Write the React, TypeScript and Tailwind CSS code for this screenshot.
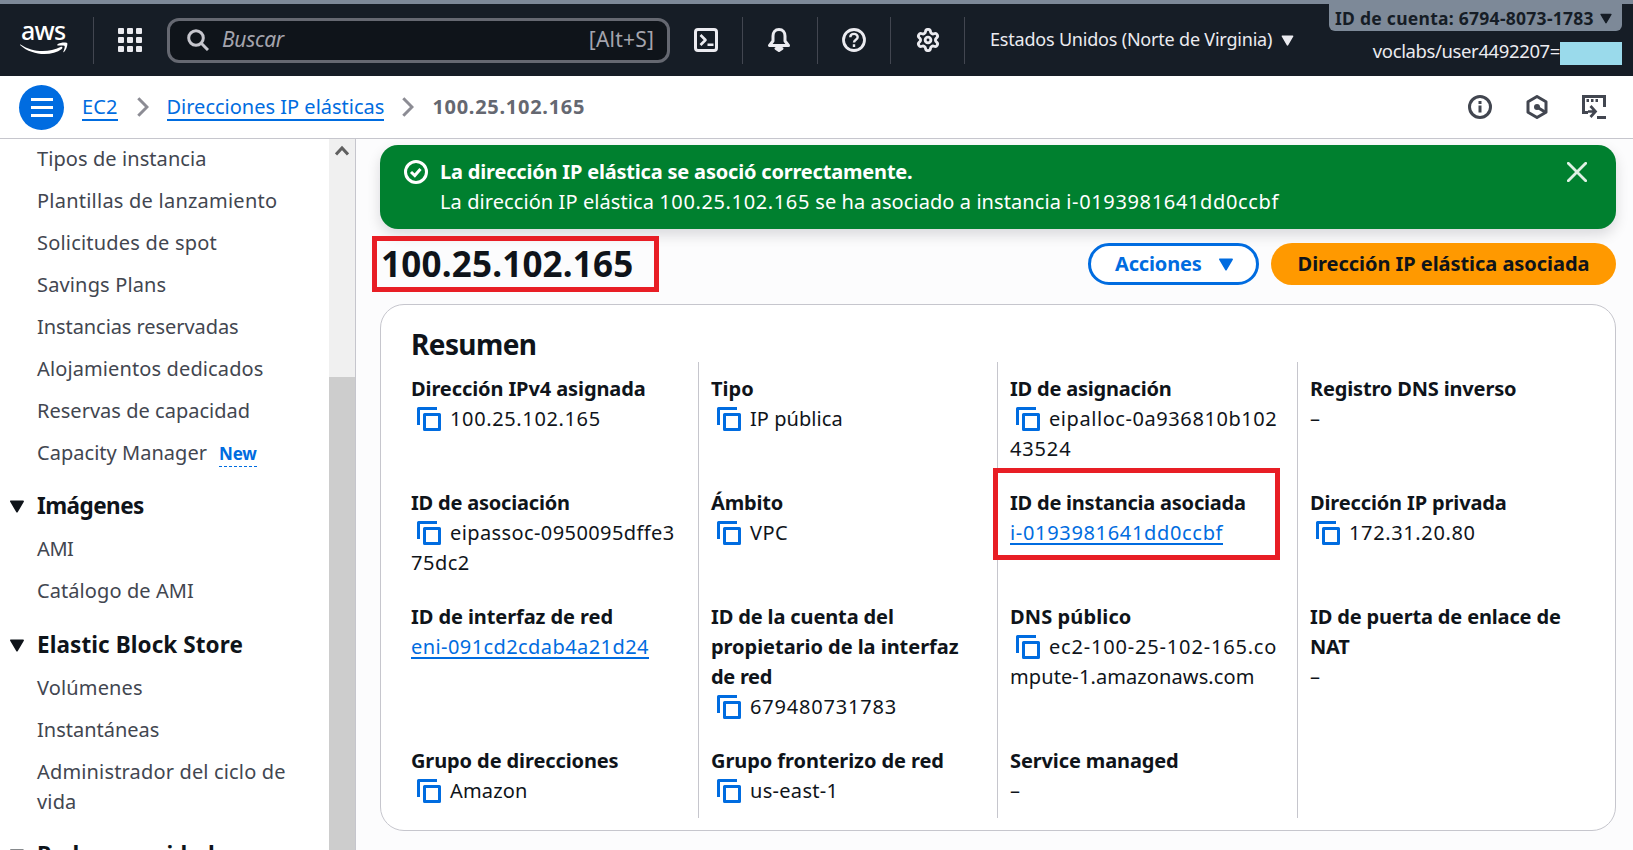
import type { ReactNode } from "react";

function Caret({ className }: { className: string }) {
  return (
    <svg viewBox="0 0 16 14" className={className} fill="currentColor" stroke="currentColor" strokeWidth="2" strokeLinejoin="round">
      <path d="M1.5 1.5h13L8 12.5z" />
    </svg>
  );
}

function CopyIcon() {
  return (
    <svg viewBox="0 0 24 24" className="mr-[9px] ml-[6px] inline-block size-[24px] align-[-5px]" fill="none" stroke="#006ce0" strokeWidth="3" strokeLinejoin="round">
      <path d="M1.5 18V1.5H20" />
      <path d="M7.5 7.5h15v15h-15z" />
    </svg>
  );
}

function Chevron() {
  return (
    <svg viewBox="0 0 12 20" className="h-[20px] w-[12px] shrink-0" fill="none" stroke="#8c8c94" strokeWidth="3">
      <path d="M1.3 1.2 10 10l-8.700 8.800" />
    </svg>
  );
}

function Divider() {
  return <div className="h-[47px] w-px shrink-0 bg-[#424650]" />;
}

function AwsLogo() {
  return (
    <div className="relative ml-[20px] h-[36px] w-[50px] shrink-0 text-white">
      <span className="absolute -top-[6px] left-[1px] text-[25px] leading-[28px] font-medium tracking-[-0.8px]">aws</span>
      <svg viewBox="0 0 50 36" className="absolute top-px left-0 h-[36px] w-[50px]" fill="white">
        <path d="M.5 21.500c12 8 28 8.500 40 2.500 1.600-.7 2.700.8 1.200 2C32 33.500 12 33 .3 22.300c-.6-.5-.2-1.100.2-.8z" />
        <path d="M37.500 21.200c2.500-2 9-2.200 9.700-1.200.7 1.200-.6 6.600-3.200 9-.5.400-.9.200-.7-.3.700-1.700 1.900-4.900 1.300-5.700-.7-.9-4.500-.6-6.500-.4-.8.100-1-.9-.6-1.400z" />
      </svg>
    </div>
  );
}

function GridIcon() {
  return (
    <div className="grid grid-cols-3 gap-[3px]">
      {Array.from({ length: 9 }, (_, i) => (
        <span key={i} className="size-[6px] rounded-[1px] bg-[#ebebf0]" />
      ))}
    </div>
  );
}

function TopBar() {
  return (
    <header className="h-[76px] shrink-0 border-t-4 border-[#7d8998] bg-[#161d26] text-[#ebebf0]">
      <div className="flex h-[72px] items-center">
        <AwsLogo />
        <div className="ml-[23px]"><Divider /></div>
        <div className="ml-[24px]"><GridIcon /></div>
        <div className="ml-[25px] flex h-[45px] w-[503px] shrink-0 items-center rounded-[12px] border-[3px] border-[#656871] bg-[#0f141a] pr-[13px] pl-[17px]">
          <svg viewBox="0 0 22 22" className="size-[22px]" fill="none" stroke="#c6c6cd" strokeWidth="3">
            <circle cx="9" cy="9" r="7.300" />
            <path d="m14 14 7 7" />
          </svg>
          <span className="ml-[13px] text-[21px] text-[#a4a4ad] italic tracking-[-0.3px]">Buscar</span>
          <span className="ml-auto text-[21px] text-[#a4a4ad] tracking-[0.2px]">[Alt+S]</span>
        </div>
        <svg viewBox="0 0 24 24" className="ml-[24px] size-[24px] shrink-0" fill="none" stroke="#ebebf0" strokeWidth="3" strokeLinejoin="round">
          <rect x="1.500" y="1.500" width="21" height="21" rx="2.500" />
          <path d="m6.500 7 5 5-5 5M13.500 16.800h6" strokeWidth="2.600" />
        </svg>
        <div className="ml-[24px]"><Divider /></div>
        <svg viewBox="0 0 24 24" className="ml-[24px] size-[24px] shrink-0" fill="none" stroke="#ebebf0" strokeWidth="3" strokeLinejoin="round">
          <path d="M12 1.500c-4 0-6 2.800-6 6.500v5L2.500 17.500h19L18 13V8c0-3.700-2-6.500-6-6.500z" />
          <path d="M9 20.500h6L12 22.500z" />
        </svg>
        <div className="ml-[26px]"><Divider /></div>
        <svg viewBox="0 0 24 24" className="ml-[24px] size-[24px] shrink-0" fill="none" stroke="#ebebf0" strokeWidth="2.800">
          <circle cx="12" cy="12" r="10.500" />
          <path d="M8.300 9.300c0-4.500 7.400-4.500 7.400-.2 0 2.800-3.700 2.500-3.700 5.400M12 16.300v2.600" strokeWidth="2.400" />
        </svg>
        <div className="ml-[24px]"><Divider /></div>
        <svg viewBox="0.700 0.700 22.600 22.600" className="ml-[25px] size-[24px] shrink-0" fill="none" stroke="#ebebf0" strokeWidth="2.700" strokeLinejoin="round">
          <path d="M9.671 4.136a2.340 2.340 0 0 1 4.659 0 2.340 2.340 0 0 0 3.319 1.915 2.340 2.340 0 0 1 2.330 4.033 2.340 2.340 0 0 0 0 3.831 2.340 2.340 0 0 1-2.330 4.033 2.340 2.340 0 0 0-3.319 1.915 2.340 2.340 0 0 1-4.659 0 2.340 2.340 0 0 0-3.320-1.915 2.340 2.340 0 0 1-2.330-4.033 2.340 2.340 0 0 0 0-3.831A2.340 2.340 0 0 1 6.350 6.051a2.340 2.340 0 0 0 3.319-1.915z" />
          <circle cx="12" cy="12" r="2.700" />
        </svg>
        <div className="ml-[24px]"><Divider /></div>
        <span className="ml-[25px] pb-px text-[18px] whitespace-nowrap tracking-[-0.200px]">Estados Unidos (Norte de Virginia)</span>
        <Caret className="ml-[9px] h-[11px] w-[13px] shrink-0" />
        <div className="mr-[11px] ml-auto flex h-[72px] flex-col items-end">
          <div className="-mt-px flex h-[28px] w-[293px] items-center justify-between rounded-b-[6px] bg-[#7d8998] pt-[2px] pr-[10px] pl-[6px] text-[#161d26]">
            <span className="text-[17.500px] font-bold whitespace-nowrap tracking-[0.270px]">ID de cuenta: 6794-8073-1783</span>
            <Caret className="h-[11px] w-[12px]" />
          </div>
          <div className="mt-[11px] flex h-[23px] items-center">
            <span className="pb-[5px] text-[18.500px] whitespace-nowrap tracking-[-0.380px]">voclabs/user4492207=</span>
            <span className="h-[23px] w-[62px] bg-[#9adaeb]" />
          </div>
        </div>
      </div>
    </header>
  );
}

function Breadcrumbs() {
  return (
    <nav className="flex h-[63px] shrink-0 items-center border-b border-[#c6c6cd] bg-white text-[20px]">
      <div className="ml-[19px] flex size-[45px] shrink-0 flex-col items-center justify-center gap-[5px] rounded-full bg-[#006ce0]">
        <span className="h-[3px] w-[22px] bg-white" />
        <span className="h-[3px] w-[22px] bg-white" />
        <span className="h-[3px] w-[22px] bg-white" />
      </div>
      <a className="ml-[18px] h-[28px] border-b-2 border-[#006ce0] leading-[28px] text-[#006ce0] tracking-[0.100px]">EC2</a>
      <div className="ml-[19px]"><Chevron /></div>
      <a className="ml-[18px] h-[28px] border-b-2 border-[#006ce0] leading-[28px] text-[#006ce0]">Direcciones IP elásticas</a>
      <div className="ml-[18px]"><Chevron /></div>
      <span className="ml-[18px] font-bold text-[#656871] tracking-[0.720px]">100.25.102.165</span>
      <div className="mr-[27px] ml-auto flex items-center gap-[33px] text-[#424650]">
        <svg viewBox="0 0 24 24" className="size-[24px]" fill="none" stroke="currentColor" strokeWidth="3">
          <circle cx="12" cy="12" r="10.500" />
          <path d="M12 10.500v7M12 6v3" />
        </svg>
        <svg viewBox="0 0 24 24" className="size-[24px]" fill="none" stroke="currentColor" strokeWidth="3" strokeLinejoin="round">
          <path d="m12 1.500 9 5.200v10.600l-9 5.200-9-5.200V6.700z" />
          <circle cx="12" cy="12" r="3" fill="currentColor" stroke="none" />
          <path d="m12 12 8 5" />
        </svg>
        <svg viewBox="0 0 24 24" className="size-[24px]" fill="none" stroke="currentColor" strokeWidth="3">
          <path d="M6 17.500H1.500v-16h21V12M15 22.500h9" />
          <path d="M4.500 5.500h2.500M9 5.500h2.500M13.500 5.500H16" />
          <path d="M6 16.500h7M8.500 11l5 5.500-5 5.500" strokeWidth="2.700" />
        </svg>
      </div>
    </nav>
  );
}

function NavItem({ children, tracking }: { children: ReactNode; tracking: string }) {
  return (
    <div className="mb-[12px] pr-[30px] pl-[37px] text-[20px] leading-[30px] text-[#424650]">
      <span className={tracking}>{children}</span>
    </div>
  );
}

function NavSection({ children, className }: { children: ReactNode; className: string }) {
  return (
    <div className={className}>
      <div className="mb-[13px] flex h-[30px] items-center pl-[9px] text-[22.500px] font-bold text-[#0f141a]">
        <Caret className="mr-[12px] h-[13px] w-[16px]" />
        {children}
      </div>
    </div>
  );
}

function Sidebar() {
  return (
    <aside className="flex w-[356px] shrink-0 border-r border-[#c6c6cd] bg-white">
      <div className="w-[329px] shrink-0 overflow-hidden pt-[5px] whitespace-nowrap">
        <NavItem tracking="tracking-[0.080px]">Tipos de instancia</NavItem>
        <NavItem tracking="tracking-[0.230px]">Plantillas de lanzamiento</NavItem>
        <NavItem tracking="tracking-[0.200px]">Solicitudes de spot</NavItem>
        <NavItem tracking="tracking-[0.150px]">Savings Plans</NavItem>
        <NavItem tracking="tracking-[-0.070px]">Instancias reservadas</NavItem>
        <NavItem tracking="tracking-[0.120px]">Alojamientos dedicados</NavItem>
        <NavItem tracking="tracking-[0.020px]">Reservas de capacidad</NavItem>
        <NavItem tracking="tracking-[0.030px]">
          Capacity Manager
          <span className="ml-[12px] inline-block border-b border-dashed border-[#006ce0] text-[17px] leading-[24px] font-bold text-[#006ce0] tracking-[-0.200px]">New</span>
        </NavItem>
        <NavSection className="pt-[11px] tracking-[-0.550px]">Imágenes</NavSection>
        <NavItem tracking="tracking-[-0.400px]">AMI</NavItem>
        <NavItem tracking="tracking-[0.080px]">Catálogo de AMI</NavItem>
        <NavSection className="pt-[12px] tracking-[0.080px]">Elastic Block Store</NavSection>
        <NavItem tracking="tracking-[0.150px]">Volúmenes</NavItem>
        <NavItem tracking="tracking-[0px]">Instantáneas</NavItem>
        <NavItem tracking="tracking-[0.160px]">Administrador del ciclo de<br />vida</NavItem>
        <NavSection className="pt-[11px] tracking-[-0.100px]">Red y seguridad</NavSection>
      </div>
      <div className="w-[26px] shrink-0 bg-[#f0f0f0]">
        <div className="flex h-[238px] justify-center pt-[6px]">
          <svg viewBox="0 0 14 12" className="h-[12px] w-[14px]" fill="none" stroke="#606060" strokeWidth="3">
            <path d="m1 9.500 6-6.500 6 6.500" />
          </svg>
        </div>
        <div className="h-full bg-[#cdcdcd]" />
      </div>
    </aside>
  );
}

/** A line of text with the letter spacing it is set in. */
type Line = [text: string, tracking: string];

function Field({ label, lines, copy, link }: { label: Line[]; lines: Line[]; copy?: boolean; link?: boolean }) {
  return (
    <div className="text-[20px] leading-[30px] whitespace-nowrap text-[#0f141a]">
      {label.map(([text, tracking]) => (
        <div key={text} className="font-bold"><span className={tracking}>{text}</span></div>
      ))}
      {lines.map(([text, tracking], i) => (
        <div key={text} className="h-[30px]">
          {copy && i === 0 && <CopyIcon />}
          <span className={tracking}>
            {link ? <a className="inline-block h-[27px] border-b-2 border-[#006ce0] text-[#006ce0]">{text}</a> : text}
          </span>
        </div>
      ))}
    </div>
  );
}

function Column({ children, first }: { children: ReactNode; first?: boolean }) {
  return (
    <div className={first ? "grid grid-rows-[114px_114px_144px_60px] py-[12px]" : "grid grid-rows-[114px_114px_144px_60px] border-l border-[#c6c6cd] py-[12px] pl-[12px]"}>
      {children}
    </div>
  );
}

function Summary() {
  return (
    <section className="h-[527px] w-[1236px] rounded-[24px] border border-[#c6c6cd] bg-white">
      <h2 className="pt-[21px] pl-[30px] text-[28px] leading-[36px] font-bold text-[#0f141a] tracking-[-0.600px]">Resumen</h2>
      <div className="relative grid grid-cols-[287px_299px_300px_300px] pl-[30px]">
        <Column first>
          <Field label={[["Dirección IPv4 asignada", "tracking-[-0.100px]"]]} lines={[["100.25.102.165", "tracking-[0.630px]"]]} copy />
          <Field label={[["ID de asociación", "tracking-[-0.200px]"]]} lines={[["eipassoc-0950095dffe3", "tracking-[0.400px]"], ["75dc2", "tracking-[0.500px]"]]} copy />
          <Field label={[["ID de interfaz de red", "tracking-[-0.080px]"]]} lines={[["eni-091cd2cdab4a21d24", "tracking-[0.420px]"]]} link />
          <Field label={[["Grupo de direcciones", "tracking-[-0.110px]"]]} lines={[["Amazon", "tracking-[0.150px]"]]} copy />
        </Column>
        <Column>
          <Field label={[["Tipo", "tracking-[0px]"]]} lines={[["IP pública", "tracking-[0.050px]"]]} copy />
          <Field label={[["Ámbito", "tracking-[-0.200px]"]]} lines={[["VPC", "tracking-[0.400px]"]]} copy />
          <Field
            label={[["ID de la cuenta del", "tracking-[-0.130px]"], ["propietario de la interfaz", "tracking-[-0.040px]"], ["de red", "tracking-[-0.300px]"]]}
            lines={[["679480731783", "tracking-[0.800px]"]]}
            copy
          />
          <Field label={[["Grupo fronterizo de red", "tracking-[-0.070px]"]]} lines={[["us-east-1", "tracking-[0.300px]"]]} copy />
        </Column>
        <Column>
          <Field label={[["ID de asignación", "tracking-[-0.200px]"]]} lines={[["eipalloc-0a936810b102", "tracking-[0.570px]"], ["43524", "tracking-[0.850px]"]]} copy />
          <Field label={[["ID de instancia asociada", "tracking-[-0.220px]"]]} lines={[["i-0193981641dd0ccbf", "tracking-[0.670px]"]]} link />
          <Field label={[["DNS público", "tracking-[0.120px]"]]} lines={[["ec2-100-25-102-165.co", "tracking-[0.820px]"], ["mpute-1.amazonaws.com", "tracking-[0.100px]"]]} copy />
          <Field label={[["Service managed", "tracking-[-0.120px]"]]} lines={[["–", "tracking-[0px]"]]} />
        </Column>
        <Column>
          <Field label={[["Registro DNS inverso", "tracking-[-0.160px]"]]} lines={[["–", "tracking-[0px]"]]} />
          <Field label={[["Dirección IP privada", "tracking-[-0.140px]"]]} lines={[["172.31.20.80", "tracking-[0.630px]"]]} copy />
          <Field label={[["ID de puerta de enlace de", "tracking-[-0.150px]"], ["NAT", "tracking-[-0.200px]"]]} lines={[["–", "tracking-[0px]"]]} />
        </Column>
        <div className="absolute top-[106px] left-[612px] h-[92px] w-[287px] border-[5px] border-[#e81e25]" />
      </div>
    </section>
  );
}

function Flash() {
  return (
    <div className="flex h-[84px] w-[1236px] rounded-[18px] bg-[#00802f] pt-[12px] pl-[24px] text-[20px] leading-[30px] text-white shadow-[0_6px_14px_rgba(0,7,22,0.14)]">
      <svg viewBox="0 0 24 24" className="mt-[3px] size-[24px] shrink-0" fill="none" stroke="white" strokeWidth="3">
        <circle cx="12" cy="12" r="10.500" />
        <path d="m7 12 3.800 3.600L16.500 9" />
      </svg>
      <div className="ml-[12px] whitespace-nowrap">
        <div className="font-bold tracking-[-0.190px]">La dirección IP elástica se asoció correctamente.</div>
        <div className="tracking-[0.080px]">
          La dirección IP elástica <span className="tracking-[0.630px]">100.25.102.165</span> se ha asociado a instancia <span className="tracking-[0.650px]">i-0193981641dd0ccbf</span>
        </div>
      </div>
      <svg viewBox="0 0 20 20" className="mt-[5px] mr-[29px] ml-auto size-[20px]" fill="none" stroke="#dff1e5" strokeWidth="2.800" strokeLinecap="round">
        <path d="m1.300 1.300 17.400 17.400M18.700 1.300 1.300 18.700" />
      </svg>
    </div>
  );
}

export default function App() {
  return (
    <div className="flex h-[850px] w-[1633px] flex-col overflow-hidden bg-[#fcfcfd] font-['Noto_Sans',sans-serif]">
      <TopBar />
      <Breadcrumbs />
      <div className="flex min-h-0 flex-1">
        <Sidebar />
        <main className="pt-[6px] pl-[24px]">
          <Flash />
          <div className="mt-[7px] mb-[12px] flex h-[56px] w-[1236px] items-center">
            <div className="-ml-[8px] flex h-[56px] w-[287px] shrink-0 items-center border-[5px] border-[#e81e25] pl-[4px] text-[35px] font-bold text-[#0f141a] tracking-[0.200px]">100.25.102.165</div>
            <button className="ml-auto flex h-[42px] w-[171px] items-center rounded-full border-[3px] border-[#006ce0] bg-white pl-[24px] text-[20px] font-bold text-[#006ce0] tracking-[-0.150px]">
              Acciones
              <Caret className="ml-[16px] h-[13px] w-[16px]" />
            </button>
            <button className="ml-[12px] h-[42px] w-[345px] rounded-full bg-[#ff9900] text-[20px] font-bold text-[#0f141a] tracking-[-0.050px]">Dirección IP elástica asociada</button>
          </div>
          <Summary />
        </main>
      </div>
    </div>
  );
}
